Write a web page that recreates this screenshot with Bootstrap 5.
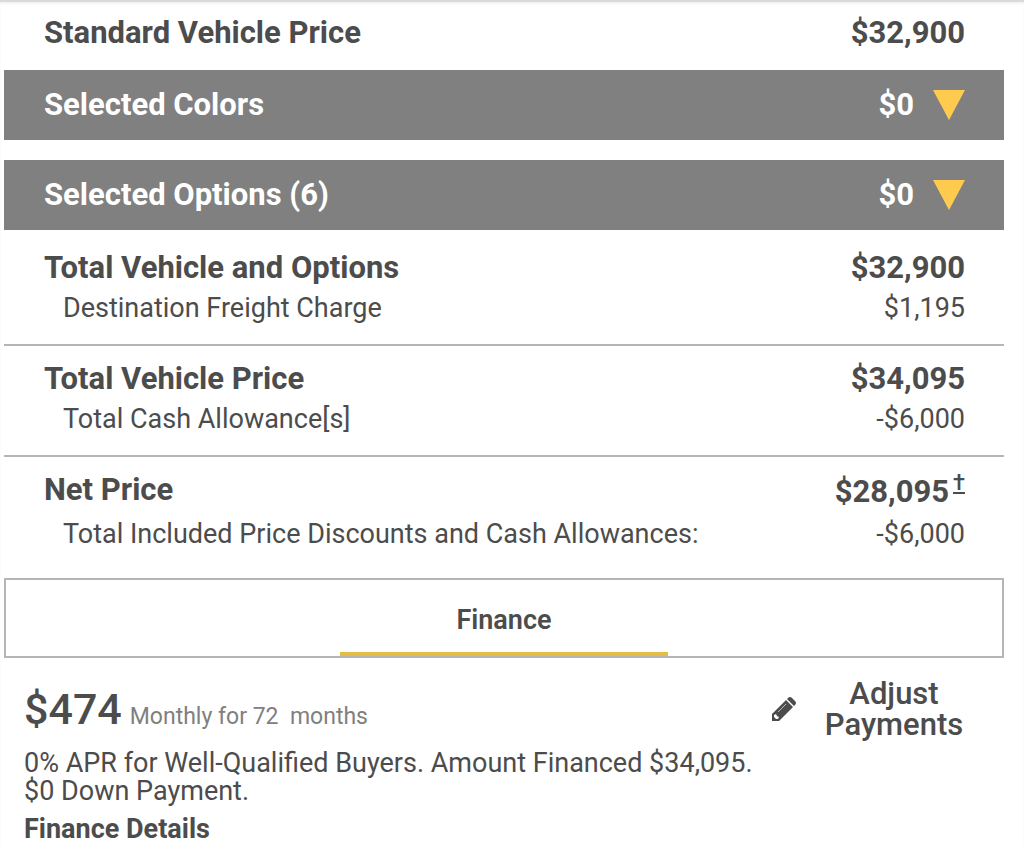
<!DOCTYPE html>
<html lang="en">
<head>
<meta charset="utf-8">
<meta name="viewport" content="width=device-width, initial-scale=1">
<title>Vehicle Price Summary</title>
<link href="https://cdn.jsdelivr.net/npm/bootstrap@5.3.0/dist/css/bootstrap.min.css" rel="stylesheet">
<style>
  body { font-family: Roboto, "Liberation Sans", sans-serif; color: #4c4c4c; background: #fff; }
  .summary { border-top: 2px solid #d9d9d9; box-shadow: inset 0 2px 2px #f3f3f3; padding: 0 20px 0 4px; }
  .line { padding: 0 39px 0 40px; line-height: 40px; }
  .line-main { font-size: 31px; font-weight: 700; }
  .line-sub { font-size: 27px; padding-left: 59px; }
  .line-first { padding-top: 11px; padding-bottom: 17px; }
  .bars { gap: 20px; }
  .bar { border: 0; background: #808080; color: #fff; font-size: 31px; font-weight: 700; height: 70px; }
  .bar svg { width: 32px; height: 30px; margin-left: 19px; fill: #ffcb4f; }
  .group { padding: 13px 0 16px; border-bottom: 2px solid #b5b5b5; }
  .group-first { padding-top: 18px; }
  .group-last { border-bottom: 0; padding-bottom: 24px; }
  .net-value { line-height: 44px; }
  .dagger { color: inherit; font-size: 22px; line-height: 20px; font-weight: 500; margin-left: 4px; }
  .tabs { border: 2px solid #b5b5b5; height: 80px; }
  .tab { border: 0; border-bottom: 4px solid #e3bd48; background: none; color: inherit; width: 328px; font-size: 27px; font-weight: 600; padding: 8px 0 0; }
  .finance { padding: 16px 0 0 20px; }
  .amount { font-size: 43px; font-weight: 500; line-height: 71px; }
  .term { font-size: 23px; line-height: 32px; color: #808080; }
  .terms { font-size: 27px; line-height: 28px; padding-top: 4px; }
  .details { font-size: 27px; line-height: 32px; font-weight: 700; color: inherit; }
  .adjust { border: 0; background: none; color: inherit; font-size: 31px; font-weight: 500; line-height: 31px; padding: 4px 39px 0 0; gap: 27px; }
  .adjust-label { width: 142px; }
</style>
</head>
<body>
<main class="summary">
  <div class="line line-main line-first d-flex justify-content-between"><span>Standard Vehicle Price</span><span>$32,900</span></div>
  <div class="bars d-flex flex-column">
    <button type="button" class="bar line w-100 d-flex align-items-center">
      <span class="me-auto">Selected Colors</span><span>$0</span>
      <svg viewBox="0 0 32 30" aria-hidden="true"><path d="M0 0h32L16 30z"/></svg>
    </button>
    <button type="button" class="bar line w-100 d-flex align-items-center">
      <span class="me-auto">Selected Options (6)</span><span>$0</span>
      <svg viewBox="0 0 32 30" aria-hidden="true"><path d="M0 0h32L16 30z"/></svg>
    </button>
  </div>
  <section class="group group-first">
    <div class="line line-main d-flex justify-content-between"><span>Total Vehicle and Options</span><span>$32,900</span></div>
    <div class="line line-sub d-flex justify-content-between"><span>Destination Freight Charge</span><span>$1,195</span></div>
  </section>
  <section class="group">
    <div class="line line-main d-flex justify-content-between"><span>Total Vehicle Price</span><span>$34,095</span></div>
    <div class="line line-sub d-flex justify-content-between"><span>Total Cash Allowance[s]</span><span>-$6,000</span></div>
  </section>
  <section class="group group-last">
    <div class="line line-main d-flex justify-content-between"><span>Net Price</span><span class="net-value">$28,095<sup><a class="dagger" href="#">†</a></sup></span></div>
    <div class="line line-sub d-flex justify-content-between"><span>Total Included Price Discounts and Cash Allowances:</span><span>-$6,000</span></div>
  </section>
  <div class="tabs d-flex justify-content-center" role="tablist">
    <button type="button" class="tab" role="tab" aria-selected="true">Finance</button>
  </div>
  <section class="finance">
    <div class="d-flex justify-content-between align-items-start">
      <div class="d-flex align-items-baseline gap-2"><span class="amount">$474</span><span class="term">Monthly for 72 &nbsp;months</span></div>
      <button type="button" class="adjust d-flex align-items-center">
        <svg width="24" height="24" viewBox="0 0 24 24" aria-hidden="true"><path fill="#4c4c4c" d="M0 24v-7L14 3l7 7L7 24zM15 2l1-1q2-2 4 0l3 3q2 2 0 4l-1 1z"/><path fill="#fff" d="M2 18l2-1 1 2 2 1-1 2H4l-2-2z"/><path stroke="#bbb" stroke-width="1" d="M6 15l8-8"/></svg>
        <span class="adjust-label">Adjust Payments</span>
      </button>
    </div>
    <p class="terms mb-2">0% APR for Well-Qualified Buyers. Amount Financed $34,095.<br>$0 Down Payment.</p>
    <a class="details text-decoration-none" href="#">Finance Details</a>
  </section>
</main>
<script src="https://cdn.jsdelivr.net/npm/bootstrap@5.3.0/dist/js/bootstrap.bundle.min.js"></script>
</body>
</html>
